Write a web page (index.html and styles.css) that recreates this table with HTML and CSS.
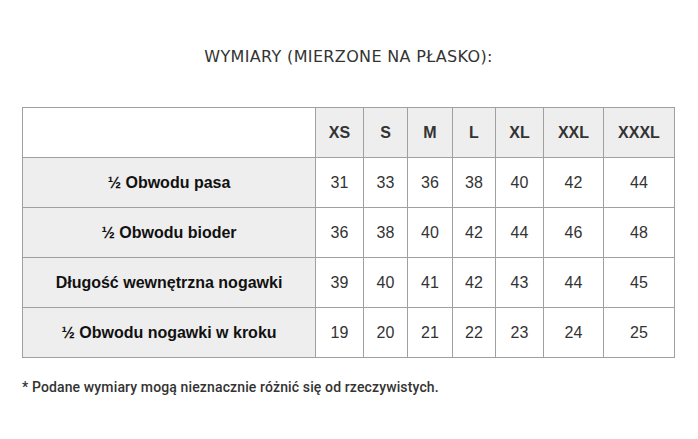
FILE: index.html
```html
<!DOCTYPE html>
<html lang="pl">
<head>
<meta charset="utf-8">
<link rel="stylesheet" href="styles.css">
</head>
<body>
<div class="page">
  <h1 class="title">WYMIARY (MIERZONE NA PŁASKO):</h1>
  <table class="sizes">
    <colgroup>
      <col class="c-label"><col class="c-xs"><col class="c-s"><col class="c-m"><col class="c-l"><col class="c-xl"><col class="c-xxl"><col class="c-xxxl">
    </colgroup>
    <thead>
      <tr>
        <th class="blank"></th><th>XS</th><th>S</th><th>M</th><th>L</th><th>XL</th><th>XXL</th><th>XXXL</th>
      </tr>
    </thead>
    <tbody>
      <tr><th class="label">½ Obwodu pasa</th><td>31</td><td>33</td><td>36</td><td>38</td><td>40</td><td>42</td><td>44</td></tr>
      <tr><th class="label">½ Obwodu bioder</th><td>36</td><td>38</td><td>40</td><td>42</td><td>44</td><td>46</td><td>48</td></tr>
      <tr><th class="label">Długość wewnętrzna nogawki</th><td>39</td><td>40</td><td>41</td><td>42</td><td>43</td><td>44</td><td>45</td></tr>
      <tr><th class="label">½ Obwodu nogawki w kroku</th><td>19</td><td>20</td><td>21</td><td>22</td><td>23</td><td>24</td><td>25</td></tr>
    </tbody>
  </table>
  <p class="note">* Podane wymiary mogą nieznacznie różnić się od rzeczywistych.</p>
</div>
</body>
</html>
```
FILE: styles.css
```css
html, body {
  margin: 0;
  padding: 0;
  background: #fff;
}
.page {
  padding: 47px 23px 0 22px;
  font-family: "Liberation Sans", Arial, sans-serif;
}
.title {
  margin: 0 0 40px 0;
  font-family: "DejaVu Sans", sans-serif;
  font-weight: normal;
  font-size: 16px;
  letter-spacing: 0.35px;
  line-height: 20px;
  color: #333;
  text-align: center;
}
.sizes {
  border-collapse: collapse;
  table-layout: fixed;
  width: 653px;
}
.c-label { width: 293px; }
.c-xs { width: 48px; }
.c-s { width: 44px; }
.c-m { width: 45px; }
.c-l { width: 43px; }
.c-xl { width: 48px; }
.c-xxl { width: 60px; }
.c-xxxl { width: 71px; }
.sizes th, .sizes td {
  border: 1px solid #a0a0a0;
  height: 49px;
  padding: 0;
  text-align: center;
  vertical-align: middle;
}
.sizes thead th {
  background: #eeeeee;
  font-family: "Liberation Sans Narrow", "Liberation Sans", sans-serif;
  font-weight: bold;
  font-size: 16px;
  color: #333;
}
.sizes thead th.blank {
  background: #fff;
}
.sizes th.label {
  background: #eeeeee;
  font-weight: bold;
  font-size: 16px;
  color: #111;
}
.sizes td {
  background: #fff;
  font-size: 16px;
  color: #333;
}
.note {
  margin: 20px 0 0 0;
  font-family: Roboto, "Liberation Sans", sans-serif;
  font-size: 14px;
  letter-spacing: 0.13px;
  line-height: 18px;
  font-weight: 500;
  color: #333;
}
```
